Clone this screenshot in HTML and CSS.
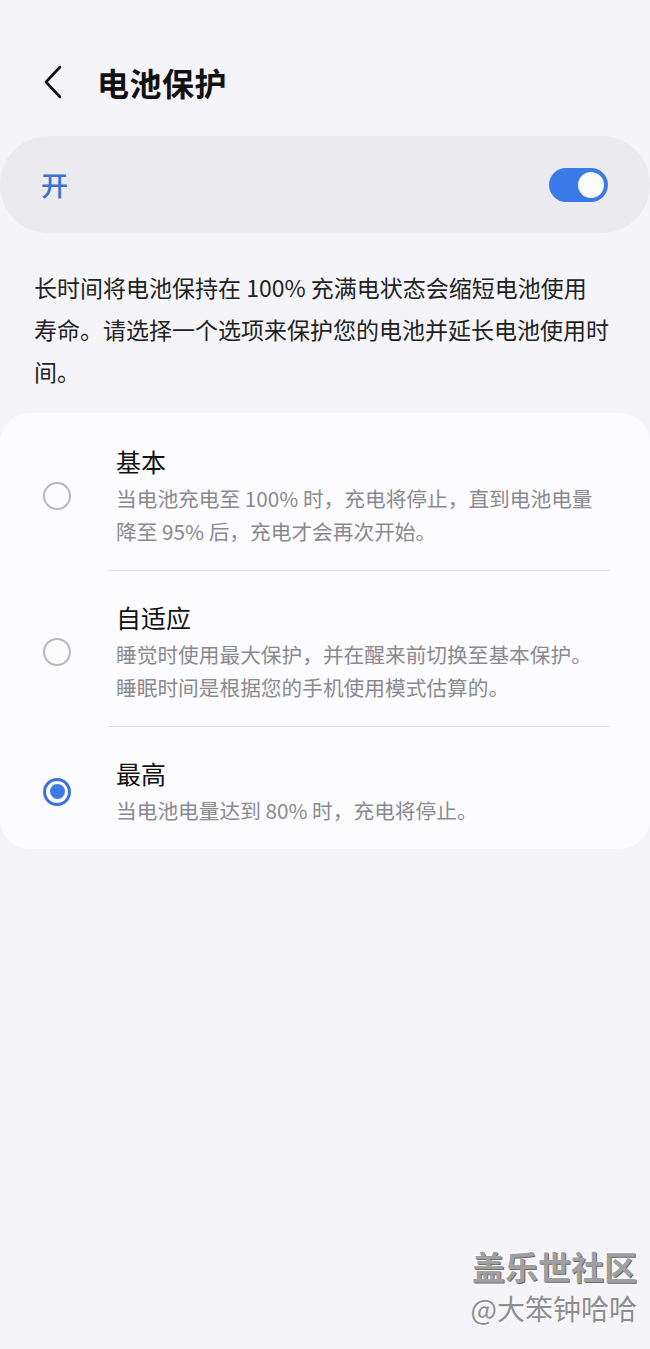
FILE: index.html
```html
<!DOCTYPE html>
<html lang="zh-CN">
<head>
    <meta charset="UTF-8">
    <meta name="viewport" content="width=device-width, initial-scale=1.0">
    <title>电池保护</title>
    <link rel="stylesheet" href="styles.css">
</head>
<body>

<div class="page">
    <div class="header">
        <svg class="back" width="20" height="34" viewBox="0 0 20 34">
            <path d="M17 2 L3 17 L17 32" fill="none" stroke="#111" stroke-width="2.6" stroke-linecap="round" stroke-linejoin="round"/>
        </svg>
        <h1>电池保护</h1>
    </div>

    <div class="switch-card">
        <span class="switch-label">开</span>
        <span class="toggle"><span class="knob"></span></span>
    </div>

    <p class="intro">长时间将电池保持在 100% 充满电状态会缩短电池使用<br>寿命。请选择一个选项来保护您的电池并延长电池使用时<br>间。</p>

    <div class="options">
        <div class="option">
            <span class="radio"></span>
            <div class="option-text">
                <div class="option-title">基本</div>
                <div class="option-desc">当电池充电至 100% 时，充电将停止，直到电池电量降至 95% 后，充电才会再次开始。</div>
            </div>
        </div>
        <div class="divider"></div>
        <div class="option">
            <span class="radio"></span>
            <div class="option-text">
                <div class="option-title">自适应</div>
                <div class="option-desc">睡觉时使用最大保护，并在醒来前切换至基本保护。睡眠时间是根据您的手机使用模式估算的。</div>
            </div>
        </div>
        <div class="divider"></div>
        <div class="option">
            <span class="radio checked"></span>
            <div class="option-text">
                <div class="option-title">最高</div>
                <div class="option-desc">当电池电量达到 80% 时，充电将停止。</div>
            </div>
        </div>
    </div>
</div>

<div class="watermark">
    <div class="wm-site">盖乐世社区</div>
    <div class="wm-user">@大笨钟哈哈</div>
</div>

</body>
</html>
```

FILE: styles.css
```css
body, html {
    margin: 0;
    height: 100%;
    font-family: "Noto Sans CJK SC", "Noto Sans", sans-serif;
    background-color: #f5f5f9;
    color: #111;
}

.page {
    position: relative;
    min-height: 100%;
}

.header {
    display: flex;
    align-items: center;
    height: 60px;
    padding: 52px 0 0 43px;
}

.back {
    display: block;
    margin-right: 34px;
}

.header h1 {
    margin: 0;
    font-size: 32px;
    font-weight: 700;
    letter-spacing: 0.5px;
}

.switch-card {
    display: flex;
    align-items: center;
    justify-content: space-between;
    height: 97px;
    margin-top: 24px;
    padding: 0 42px 0 41px;
    border-radius: 48px;
    background-color: #ebebef;
}

.switch-label {
    font-size: 27px;
    font-weight: 500;
    color: #3a6fd6;
}

.toggle {
    display: flex;
    justify-content: flex-end;
    align-items: center;
    width: 59px;
    height: 34px;
    padding: 0 4px;
    box-sizing: border-box;
    border-radius: 17px;
    background-color: #3b78e8;
}

.knob {
    width: 26px;
    height: 26px;
    border-radius: 50%;
    background-color: #fbfbfd;
}

.intro {
    margin: 33px 0 0;
    padding: 0 20px 0 34px;
    font-size: 23px;
    line-height: 42px;
    color: #222;
}

.options {
    margin-top: 21px;
    padding: 0 40px 0 43px;
    border-radius: 30px;
    background-color: #fcfcfe;
}

.option {
    display: flex;
    align-items: center;
    padding: 29px 0 22px;
}

.option:first-child {
    padding-top: 31px;
}

.option:last-child {
    padding-bottom: 22px;
}

.radio {
    flex: none;
    width: 28px;
    height: 28px;
    box-sizing: border-box;
    border: 2.5px solid #b8b8bc;
    border-radius: 50%;
    margin-right: 45px;
    position: relative;
}

.radio.checked {
    border: 3px solid #3b72de;
}

.radio.checked::after {
    content: "";
    position: absolute;
    left: 3.5px;
    top: 3.5px;
    width: 15px;
    height: 15px;
    border-radius: 50%;
    background-color: #3b78e8;
}

.option-text {
    flex: 1;
    padding-right: 10px;
}

.option-title {
    font-size: 25px;
    line-height: 34px;
    color: #111;
    margin-bottom: 4px;
}

.option-desc {
    font-size: 20.7px;
    line-height: 33px;
    color: #8a8a8e;
}

.divider {
    height: 1px;
    margin-left: 65px;
    background-color: #e2e2e6;
}

.watermark {
    position: absolute;
    right: 13px;
    top: 1244px;
    text-align: right;
    color: #9a9a9a;
}

.wm-site {
    font-size: 33px;
    font-weight: 700;
    line-height: 44px;
    color: #a0a0a0;
    text-shadow: 1px 1px 0 #6c6c6c, -1px -1px 0 #ffffff;
}

.wm-user {
    font-size: 28px;
    line-height: 40px;
    color: #8e8e8e;
    text-shadow: 1px 1px 0 #ffffff;
}
```
